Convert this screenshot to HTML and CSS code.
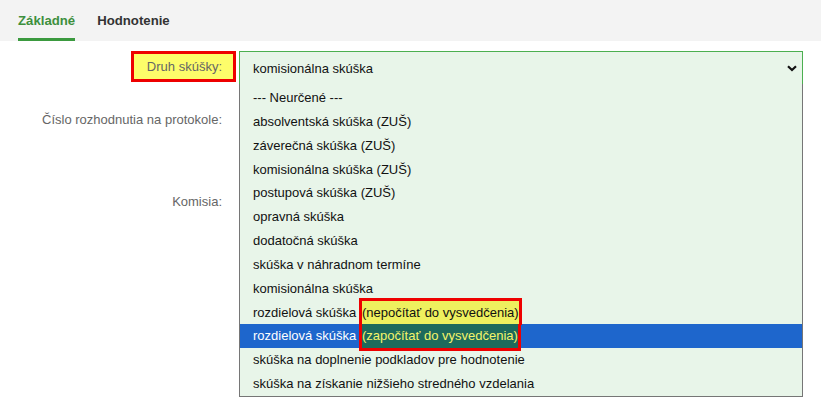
FILE: index.html
```html
<!DOCTYPE html>
<html lang="sk">
<head>
<meta charset="utf-8">
<title>Skúška</title>
<link rel="stylesheet" href="styles.css">
</head>
<body>
<nav class="tabs">
  <span class="tab active">Základné</span>
  <span class="tab">Hodnotenie</span>
</nav>
<main class="form">
  <div class="row row-first">
    <div class="label-cell"><span class="label-mark">Druh skúšky:</span></div>
    <div class="field">
      <div class="select">
        <span>komisionálna skúška</span>
        <svg class="chev" width="10" height="7" viewBox="0 0 10 7"><path d="M1 1.2 L5 5 L9 1.2" fill="none" stroke="#111" stroke-width="2.2"/></svg>
      </div>
      <ul class="dropdown">
        <li>--- Neurčené ---</li>
        <li>absolventská skúška (ZUŠ)</li>
        <li>záverečná skúška (ZUŠ)</li>
        <li>komisionálna skúška (ZUŠ)</li>
        <li>postupová skúška (ZUŠ)</li>
        <li>opravná skúška</li>
        <li>dodatočná skúška</li>
        <li>skúška v náhradnom termíne</li>
        <li>komisionálna skúška</li>
        <li>rozdielová skúška <span class="note note-top">(nepočítať do vysvedčenia)</span></li>
        <li class="selected">rozdielová skúška <span class="note note-bottom">(započítať do vysvedčenia)</span></li>
        <li>skúška na doplnenie podkladov pre hodnotenie</li>
        <li>skúška na získanie nižšieho stredného vzdelania</li>
      </ul>
    </div>
  </div>
  <div class="row row-second">
    <div class="label-cell"><span class="label">Číslo rozhodnutia na protokole:</span></div>
  </div>
  <div class="row row-third">
    <div class="label-cell"><span class="label">Komisia:</span></div>
  </div>
</main>
</body>
</html>
```
FILE: styles.css
```css
* { box-sizing: border-box; }
html, body { margin: 0; padding: 0; }
body {
  width: 821px;
  height: 406px;
  overflow: hidden;
  background: #fff;
  font-family: "Liberation Sans", Arial, sans-serif;
  font-size: 13px;
  color: #111;
}
.tabs {
  display: flex;
  gap: 22px;
  height: 41px;
  padding-left: 18px;
  background: #f3f3f3;
}
.tab {
  display: flex;
  align-items: center;
  font-weight: bold;
  font-size: 13.2px;
  color: #333;
  border-bottom: 3px solid transparent;
  padding-top: 3px;
}
.tab.active {
  color: #3d8f3d;
  border-bottom-color: #3b9a3f;
}
.form {
  padding-top: 10px;
}
.row {
  display: grid;
  grid-template-columns: 236px 564px;
  column-gap: 3px;
}
.label-cell {
  display: flex;
  justify-content: flex-end;
  align-items: flex-start;
  color: #666;
}
.label-mark {
  display: block;
  height: 31px;
  line-height: 25px;
  padding: 0 11px 0 13px;
  border: 3px solid #ee0000;
  background: #fdfd6a;
}
.label {
  display: block;
  padding-right: 14px;
  line-height: 16px;
}
.row-second .label-cell { padding-top: 27px; }
.row-third .label-cell { padding-top: 66px; }
.field {
  position: relative;
}
.select {
  display: flex;
  align-items: center;
  justify-content: space-between;
  height: 34px;
  padding: 0 5px 0 13px;
  border: 1px solid #4caf50;
  background: #e8f5e9;
  color: #111;
}
.chev { margin-top: 1px; }
.dropdown {
  position: absolute;
  left: 0;
  top: 33px;
  width: 564px;
  margin: 0;
  padding: 2px 0 0;
  list-style: none;
  background: #e8f5e9;
  border: 1px solid #767676;
  border-top: none;
  z-index: 5;
}
.dropdown li {
  height: 23.85px;
  line-height: 24px;
  padding-left: 13px;
  white-space: nowrap;
  color: #111;
}
.dropdown li.selected {
  background: #1e66cc;
  color: #fff;
}
.note {
  display: inline-block;
  vertical-align: top;
  height: 24px;
  line-height: 24px;
  border-left: 3px solid #ee0000;
  border-right: 3px solid #ee0000;
  margin-left: -1px;
}
.note-top {
  height: 27px;
  border-top: 3px solid #ee0000;
  margin-top: -3px;
  background: #eef05e;
  color: #111;
}
.note-bottom {
  height: 27px;
  border-bottom: 3px solid #ee0000;
  margin-bottom: -3px;
  background: #1d6a5c;
  color: #f4f46a;
}
```
